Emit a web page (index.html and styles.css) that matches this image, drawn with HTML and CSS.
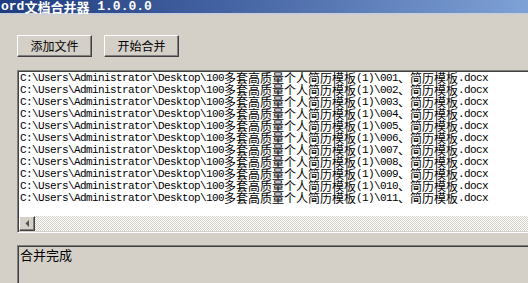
FILE: index.html
```html
<!DOCTYPE html>
<html lang="zh-CN">
<head>
    <meta charset="UTF-8">
    <title>Word文档合并器 1.0.0.0</title>
    <link rel="stylesheet" href="styles.css">
</head>
<body>
    <div class="window">
        <!-- Title bar (window is cropped on the left) -->
        <div class="titlebar"><span class="title">ord<span class="cj">文档合并器</span> 1.0.0.0</span></div>

        <div class="client">
            <!-- Actions -->
            <div class="toolbar">
                <button class="btn">添加文件</button>
                <button class="btn">开始合并</button>
            </div>

            <!-- File list -->
            <div class="listbox">
                <div class="lines">
                    <div class="line">C:\Users\Administrator\Desktop\100<span class="cj">多套高质量个人简历模板</span>(1)\001<span class="cj">、简历模板</span>.docx</div>
                    <div class="line">C:\Users\Administrator\Desktop\100<span class="cj">多套高质量个人简历模板</span>(1)\002<span class="cj">、简历模板</span>.docx</div>
                    <div class="line">C:\Users\Administrator\Desktop\100<span class="cj">多套高质量个人简历模板</span>(1)\003<span class="cj">、简历模板</span>.docx</div>
                    <div class="line">C:\Users\Administrator\Desktop\100<span class="cj">多套高质量个人简历模板</span>(1)\004<span class="cj">、简历模板</span>.docx</div>
                    <div class="line">C:\Users\Administrator\Desktop\100<span class="cj">多套高质量个人简历模板</span>(1)\005<span class="cj">、简历模板</span>.docx</div>
                    <div class="line">C:\Users\Administrator\Desktop\100<span class="cj">多套高质量个人简历模板</span>(1)\006<span class="cj">、简历模板</span>.docx</div>
                    <div class="line">C:\Users\Administrator\Desktop\100<span class="cj">多套高质量个人简历模板</span>(1)\007<span class="cj">、简历模板</span>.docx</div>
                    <div class="line">C:\Users\Administrator\Desktop\100<span class="cj">多套高质量个人简历模板</span>(1)\008<span class="cj">、简历模板</span>.docx</div>
                    <div class="line">C:\Users\Administrator\Desktop\100<span class="cj">多套高质量个人简历模板</span>(1)\009<span class="cj">、简历模板</span>.docx</div>
                    <div class="line">C:\Users\Administrator\Desktop\100<span class="cj">多套高质量个人简历模板</span>(1)\010<span class="cj">、简历模板</span>.docx</div>
                    <div class="line">C:\Users\Administrator\Desktop\100<span class="cj">多套高质量个人简历模板</span>(1)\011<span class="cj">、简历模板</span>.docx</div>
                </div>
                <div class="hscroll">
                    <div class="arrow">
                        <svg width="4" height="7" viewBox="0 0 4 7"><path d="M4 0 L4 7 L0.5 3.5 Z" fill="#505050"/></svg>
                    </div>
                    <div class="track"></div>
                </div>
            </div>

            <!-- Status -->
            <div class="status">合并完成</div>
        </div>
    </div>
</body>
</html>
```

FILE: styles.css
```css
/* Classic Windows look */
html, body {
    margin: 0;
    padding: 0;
    height: 100%;
    overflow: hidden;
}
body {
    background-color: #d4d0c8;
    font-family: "Liberation Mono", "Noto Sans CJK SC", monospace;
}
.window {
    width: 528px;
    height: 283px;
    overflow: hidden;
}
.titlebar {
    height: 13px;
    border-bottom: 2px solid #c9cdd6;
    background: linear-gradient(to right, #1f3c7e, #4b6aa8 50%, #7ea1d6);
    white-space: nowrap;
}
.title {
    display: block;
    padding-left: 1px;
    color: #ffffff;
    font-size: 13px;
    font-weight: bold;
    line-height: 13px;
    height: 13px;
}
.title .cj {
    display: inline-block;
    height: 13px;
    line-height: 13px;
    vertical-align: top;
    font-family: "Noto Sans CJK SC", sans-serif;
    font-size: 13px;
}
.client {
    padding-left: 17px;
}
.toolbar {
    display: flex;
    gap: 12px;
    margin-top: 20px;
}
.btn {
    width: 75px;
    height: 22px;
    margin: 0;
    padding: 0;
    background-color: #d4d0c8;
    border: 1px solid;
    border-color: #ffffff #404040 #404040 #ffffff;
    box-shadow: inset -1px -1px 0 #808080;
    font-family: "Noto Sans CJK SC", sans-serif;
    font-size: 12px;
    line-height: 18px;
    color: #000000;
}
.listbox {
    width: 600px;
    margin-top: 13px;
    background-color: #ffffff;
    border: 1px solid;
    border-color: #808080 #ffffff #ffffff #808080;
    box-shadow: inset 1px 1px 0 #404040, inset -1px -1px 0 #d4d0c8;
    padding: 1px;
}
.lines {
    height: 144px;
    padding-left: 1px;
}
.line {
    height: 12px;
    font-size: 11px;
    line-height: 12px;
    letter-spacing: -0.6px;
    white-space: nowrap;
    color: #000000;
}
.line .cj {
    display: inline-block;
    height: 12px;
    line-height: 12px;
    vertical-align: top;
    font-family: "Noto Sans CJK SC", sans-serif;
    font-size: 12px;
    letter-spacing: 0;
}
.hscroll {
    display: flex;
    height: 15px;
}
.arrow {
    width: 14px;
    height: 13px;
    background-color: #d4d0c8;
    border: 1px solid;
    border-color: #ffffff #404040 #404040 #ffffff;
    box-shadow: inset -1px -1px 0 #808080;
    display: flex;
    align-items: center;
    justify-content: center;
}
.track {
    flex: 1;
    background: repeating-conic-gradient(#d4d0c8 0 25%, #ffffff 0 50%) 0 0 / 2px 2px;
}
.status {
    width: 600px;
    height: 60px;
    margin-top: 12px;
    border-top: 1px solid #808080;
    border-left: 1px solid #808080;
    box-shadow: inset 1px 1px 0 #404040;
    padding: 2px 0 0 2px;
    font-family: "Noto Sans CJK SC", sans-serif;
    font-size: 13px;
    line-height: 14px;
    color: #000000;
}
```
